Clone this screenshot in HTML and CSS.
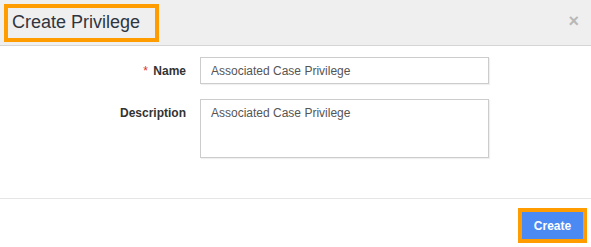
FILE: index.html
```html
<!DOCTYPE html>
<html lang="en">
<head>
  <meta charset="UTF-8" />
  <title>Create Privilege</title>
  <link rel="stylesheet" href="styles.css">
</head>
<body>
  <div class="modal">
    <div class="modal-header">
      <h4 class="modal-title">Create Privilege</h4>
      <span class="close">&times;</span>
    </div>
    <div class="modal-body">
      <div class="form-row">
        <label class="form-label"><span class="req">*</span> Name</label>
        <input class="form-input" type="text" value="Associated Case Privilege">
      </div>
      <div class="form-row">
        <label class="form-label">Description</label>
        <textarea class="form-input form-area">Associated Case Privilege</textarea>
      </div>
    </div>
    <div class="modal-footer">
      <button class="btn-create">Create</button>
    </div>
  </div>
</body>
</html>
```

FILE: styles.css
```css
* {
  box-sizing: border-box;
}
body {
  margin: 0;
  background: #fff;
  font-family: "Liberation Sans", Arial, sans-serif;
  color: #333;
}
.modal {
  width: 591px;
  height: 247px;
  display: flex;
  flex-direction: column;
}
.modal-header {
  height: 46px;
  background: #efefef;
  border-bottom: 1px solid #d5d5d5;
  display: flex;
  align-items: flex-start;
  justify-content: space-between;
  padding: 4px 12px 0 4px;
}
.modal-title {
  margin: 0;
  width: 155px;
  height: 38px;
  border: 4px solid #ff9c00;
  font-size: 18px;
  font-weight: normal;
  line-height: 29px;
  padding-left: 4px;
  color: #2f3540;
}
.close {
  font-size: 18px;
  font-weight: bold;
  color: #b8b8b8;
  line-height: 1;
  margin-top: 8px;
}
.modal-body {
  flex: 1;
  padding-top: 11px;
}
.form-row {
  display: flex;
  align-items: flex-start;
  margin-bottom: 15px;
}
.form-label {
  width: 186px;
  text-align: right;
  font-size: 12px;
  font-weight: bold;
  line-height: 14px;
  padding-top: 7px;
  margin-right: 14px;
}
.req {
  color: #e0301e;
  font-weight: normal;
  margin-right: 2px;
}
.form-input {
  width: 289px;
  height: 27px;
  border: 1px solid #ccc;
  font-family: "Liberation Sans", Arial, sans-serif;
  font-size: 12px;
  color: #555;
  padding: 5px 10px;
  margin: 0;
  box-shadow: 1px 1px 1px rgba(0,0,0,0.06);
}
.form-area {
  height: 59px;
  resize: none;
  line-height: 14px;
  padding-top: 6px;
}
.modal-footer {
  border-top: 1px solid #e5e5e5;
  height: 49px;
  display: flex;
  justify-content: flex-end;
  align-items: flex-start;
  padding: 9px 4px 0 0;
}
.btn-create {
  width: 69px;
  height: 35px;
  border: 4px solid #ff9c00;
  background: #4b8af3;
  color: #fff;
  font-family: "Liberation Sans", Arial, sans-serif;
  font-weight: bold;
  font-size: 12px;
  padding: 0;
}
```
